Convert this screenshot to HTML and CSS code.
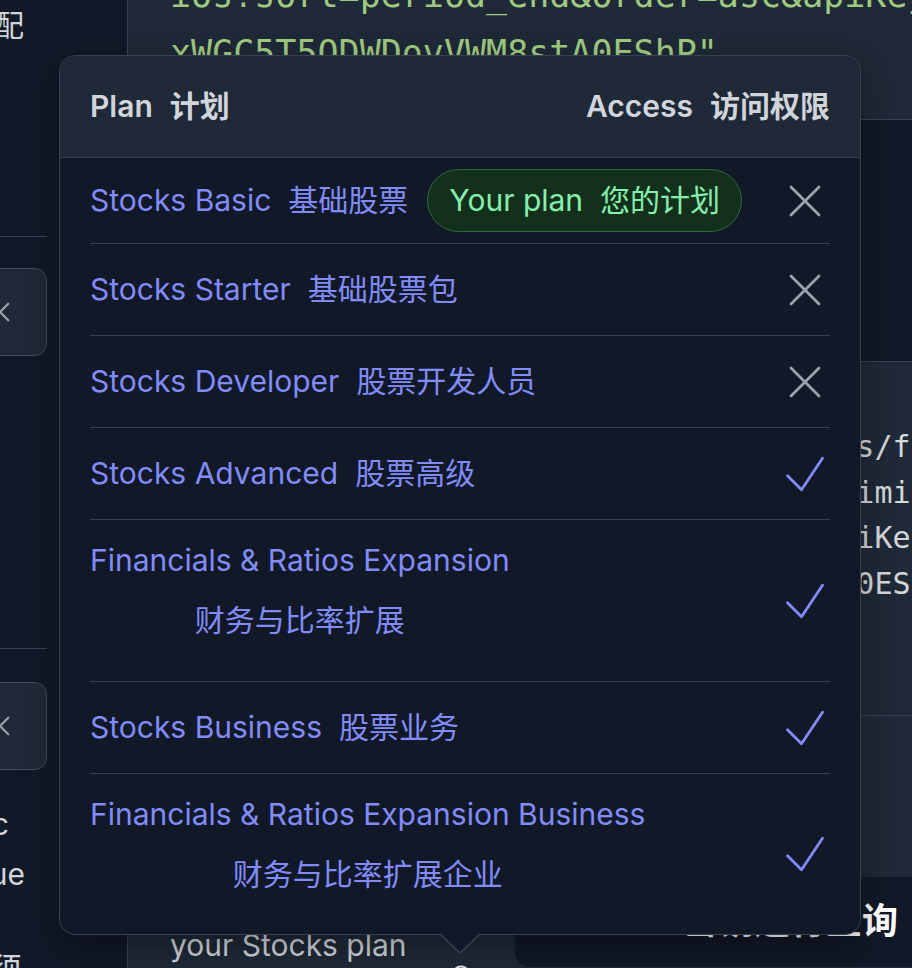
FILE: index.html
```html
<!DOCTYPE html>
<html lang="zh">
<head>
<meta charset="utf-8">
<title>Plan access</title>
<link rel="stylesheet" href="styles.css">
</head>
<body>
<div class="page">
  <aside class="sidebar">
    <div class="side-inner">
      <p class="side-text side-text--top">按文件名称进行匹配</p>
      <hr class="side-rule side-rule--a">
      <button class="side-btn side-btn--a" type="button" aria-label="remove">
        <svg viewBox="0 0 24 24"><path d="M3 3 21 21M21 3 3 21"/></svg>
      </button>
      <hr class="side-rule side-rule--b">
      <button class="side-btn side-btn--b" type="button" aria-label="remove">
        <svg viewBox="0 0 24 24"><path d="M3 3 21 21M21 3 3 21"/></svg>
      </button>
      <p class="side-text side-text--mid">
        <span class="side-line side-line--c">Sort by the logic</span>
        <span class="side-line side-line--ue">Filter by value</span>
      </p>
      <p class="side-text side-text--bottom">参数为必须</p>
    </div>
  </aside>

  <main class="main">
    <div class="code-a">
<pre>ios?sort=period_end&amp;order=asc&amp;apiKey=Ln6
xWGC5T5ODWDovVWM8stA0EShP"</pre>
    </div>
    <div class="gap"></div>
    <section class="panel">
<pre class="code-b">$ curl https://api.polygon.io/vX/stocks/financials
    ?ticker=AAPL&amp;timeframe=quarterly&amp;limit=5
        &amp;order=asc&amp;sort=filing_date&amp;apiKey=Ln6kJq
                  xWGC5T5ODWDovVWM8stA0EShP"</pre>
      <div class="lower">
        <div class="lower-left">
          <p class="note">Fields returned depend on<br>your Stocks plan</p>
          <div class="info-row">
            <svg class="info" viewBox="0 0 20 20"><circle cx="10" cy="10" r="8.5"/></svg>
          </div>
        </div>
        <div class="lower-right">
          <div class="card">
            <h2 class="card-title">API 密钥进行查询</h2>
          </div>
        </div>
      </div>
    </section>
  </main>
</div>

<div class="popup" role="tooltip">
  <div class="popup-head">
    <span class="head-cell">Plan<span class="zh">计划</span></span>
    <span class="head-cell">Access<span class="zh">访问权限</span></span>
  </div>
  <div class="popup-body">
    <div class="row row--first">
      <div class="name">Stocks Basic<span class="zh">基础股票</span><span class="badge">Your plan<span class="zh">您的计划</span></span></div>
      <div class="access"><svg class="ico ico--x" viewBox="0 0 24 24"><path d="M6 18 18 6M6 6l12 12"/></svg></div>
    </div>
    <div class="row">
      <div class="name">Stocks Starter<span class="zh">基础股票包</span></div>
      <div class="access"><svg class="ico ico--x" viewBox="0 0 24 24"><path d="M6 18 18 6M6 6l12 12"/></svg></div>
    </div>
    <div class="row">
      <div class="name">Stocks Developer<span class="zh">股票开发人员</span></div>
      <div class="access"><svg class="ico ico--x" viewBox="0 0 24 24"><path d="M6 18 18 6M6 6l12 12"/></svg></div>
    </div>
    <div class="row">
      <div class="name">Stocks Advanced<span class="zh">股票高级</span></div>
      <div class="access"><svg class="ico ico--check" viewBox="0 0 24 24"><path d="m4.5 12.75 6 6 9-13.5"/></svg></div>
    </div>
    <div class="row row--tall">
      <div class="name name--stack"><span>Financials &amp; Ratios Expansion</span><span class="zh">财务与比率扩展</span></div>
      <div class="access"><svg class="ico ico--check" viewBox="0 0 24 24"><path d="m4.5 12.75 6 6 9-13.5"/></svg></div>
    </div>
    <div class="row">
      <div class="name">Stocks Business<span class="zh">股票业务</span></div>
      <div class="access"><svg class="ico ico--check" viewBox="0 0 24 24"><path d="m4.5 12.75 6 6 9-13.5"/></svg></div>
    </div>
    <div class="row row--last">
      <div class="name name--stack"><span>Financials &amp; Ratios Expansion Business</span><span class="zh">财务与比率扩展企业</span></div>
      <div class="access"><svg class="ico ico--check" viewBox="0 0 24 24"><path d="m4.5 12.75 6 6 9-13.5"/></svg></div>
    </div>
  </div>
  <svg class="popup-arrow" viewBox="0 0 42 21"><path d="M1 1 21 20 41 1"/></svg>
</div>
</body>
</html>
```

FILE: styles.css
```css
* { box-sizing: border-box; }
html, body { margin: 0; padding: 0; }
body {
  width: 912px;
  height: 968px;
  overflow: hidden;
  position: relative;
  background: #111827;
  color: #d1d5db;
  font-family: Inter, "Noto Sans CJK SC", sans-serif;
}

.page { display: flex; height: 968px; }

/* ---------- sidebar ---------- */
.sidebar {
  width: 128px;
  flex: none;
  border-right: 1px solid #374151;
  padding-right: 80px;
  overflow: hidden;
}
.side-inner { display: flex; flex-direction: column; align-items: flex-end; }
.side-text {
  margin: 0;
  width: 340px;
  flex: none;
  font-size: 30px;
  line-height: 45px;
  text-align: right;
  white-space: nowrap;
  color: #d1d5db;
}
.side-text--top { margin-top: 3px; padding-right: 23px; }
.side-rule {
  width: 340px;
  height: 1px;
  flex: none;
  border: 0;
  margin: 0;
  background: #374151;
}
.side-rule--a { margin-top: 188px; }
.side-rule--b { margin-top: 292px; }
.side-btn {
  width: 94px;
  height: 88px;
  flex: none;
  padding: 0;
  border: 1.5px solid #434a56;
  border-radius: 12px;
  background: #1f2937;
  color: #9ca3af;
  display: flex;
  align-items: center;
  justify-content: center;
}
.side-btn--a { margin-top: 31px; }
.side-btn--b { margin-top: 33px; }
.side-btn svg {
  width: 22px;
  height: 22px;
  fill: none;
  stroke: currentColor;
  stroke-width: 2.4;
  stroke-linecap: round;
}
.side-text--mid { margin-top: 29px; line-height: 50px; }
.side-line { display: block; }
.side-line--c { padding-right: 38px; }
.side-line--ue { padding-right: 22px; }
.side-text--bottom { margin-top: 47px; padding-right: 25px; }

/* ---------- main ---------- */
.main { flex: 1; min-width: 0; display: flex; flex-direction: column; }

.code-a {
  height: 120px;
  flex: none;
  background: #1f2937;
  border-bottom: 1px solid #374151;
  padding-left: 42px;
  overflow: hidden;
}
.code-a pre {
  margin: -34px 0 0;
  font-family: "DejaVu Sans Mono", monospace;
  font-size: 35px;
  line-height: 58px;
  color: #9fc97f;
  white-space: pre;
}

.gap { height: 241px; flex: none; }

.panel {
  flex: 1;
  display: flex;
  flex-direction: column;
  background: #1f2937;
  border-top: 1px solid #374151;
}
.code-b {
  margin: 0;
  height: 354px;
  flex: none;
  padding: 62px 0 0 42px;
  font-family: "DejaVu Sans Mono", monospace;
  font-size: 30px;
  line-height: 45.6px;
  color: #d4d6da;
  white-space: pre;
  overflow: hidden;
  border-bottom: 1px solid #374151;
}

.lower { flex: 1; display: grid; grid-template-columns: 387px 1fr; }
.note {
  margin: 166px 0 0;
  padding-left: 42px;
  font-size: 30px;
  line-height: 42px;
  color: #d1d5db;
  white-space: nowrap;
}
.info-row { margin-top: -1px; padding-left: 323px; }
.info {
  display: block;
  width: 20px;
  height: 20px;
  fill: none;
  stroke: #e5e7eb;
  stroke-width: 1.8;
}

.lower-right { padding-top: 161px; min-width: 0; }
.card {
  height: 90px;
  background: #111827;
  border-radius: 14px 0 0 14px;
  overflow: hidden;
}
.card-title {
  margin: 0;
  padding: 23px 14px 0 0;
  font-size: 36px;
  line-height: 43px;
  font-weight: 700;
  color: #ffffff;
  text-align: right;
  white-space: nowrap;
}

/* ---------- popup ---------- */
.popup {
  position: absolute;
  left: 59px;
  top: 55px;
  width: 802px;
  background: #111827;
  border: 1px solid #374151;
  border-radius: 16px;
  box-shadow: 0 12px 32px rgba(0, 0, 0, 0.35);
}
.popup-head {
  height: 102px;
  padding: 0 30px;
  display: flex;
  align-items: center;
  justify-content: space-between;
  background: #1f2937;
  border-bottom: 1px solid #374151;
  border-radius: 15px 15px 0 0;
  font-size: 30px;
  line-height: 45px;
  font-weight: 600;
  color: #d1d5db;
  white-space: nowrap;
}
.head-cell { display: flex; align-items: center; }

.zh { margin-left: 17px; }

.popup-body { padding: 0 30px; }
.row {
  height: 92px;
  display: flex;
  align-items: center;
  justify-content: space-between;
  border-bottom: 1px solid #374151;
}
.row--first { height: 86px; }
.row--tall { height: 162px; }
.row--last { height: 160px; border-bottom: 0; }

.name {
  display: flex;
  align-items: center;
  font-size: 30px;
  line-height: 45px;
  color: #818cf8;
  white-space: nowrap;
}
.name--stack { flex-direction: column; align-items: center; padding-bottom: 20px; }
.name--stack .zh { margin: 15px 0 0; }

.badge {
  margin-left: 19px;
  display: inline-flex;
  align-items: center;
  padding: 8px 21px;
  border: 1.5px solid #2e6b3b;
  border-radius: 999px;
  background: #13301c;
  color: #86efac;
}

.access { width: 50px; display: flex; justify-content: center; }
.ico {
  width: 56px;
  height: 56px;
  flex: none;
  fill: none;
  stroke: currentColor;
  stroke-width: 1.2;
  stroke-linecap: round;
  stroke-linejoin: round;
}
.ico--x { color: #9ca3af; }
.ico--check { color: #818cf8; }

.popup-arrow {
  position: absolute;
  left: 379px;
  top: 877px;
  width: 42px;
  height: 21px;
  fill: #111827;
  stroke: #374151;
  stroke-width: 1.5;
}
```
